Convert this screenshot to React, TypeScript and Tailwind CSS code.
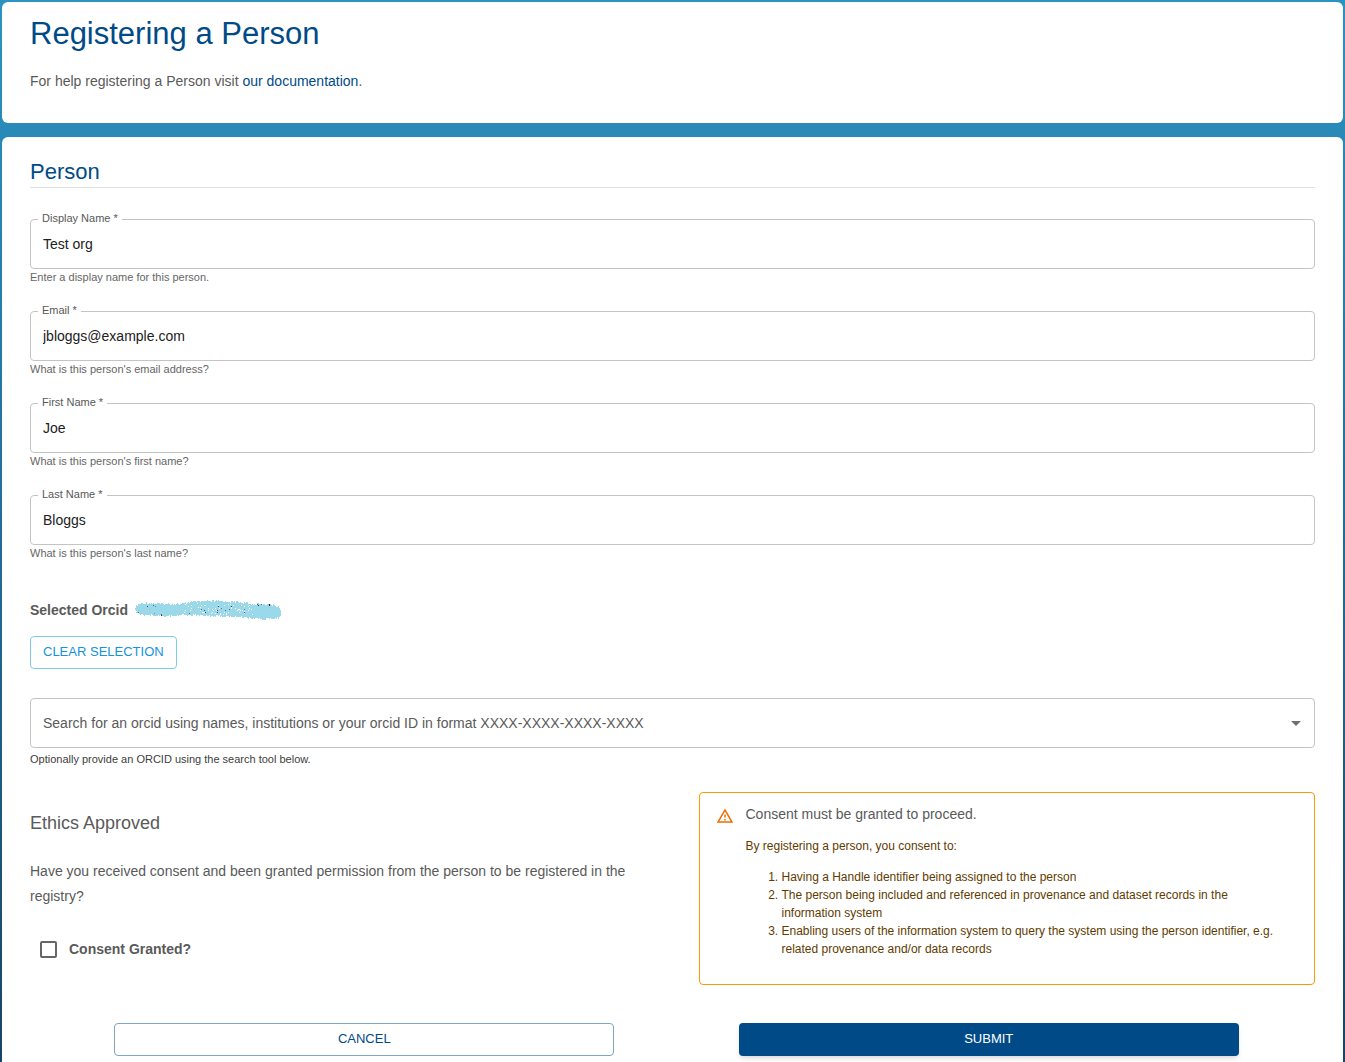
import React from "react";

type FieldProps = {
  id: string;
  label: string;
  value: string;
  helper: string;
  type?: string;
};

const fields: FieldProps[] = [
  { id: "display-name", label: "Display Name", value: "Test org", helper: "Enter a display name for this person." },
  { id: "email", label: "Email", value: "jbloggs@example.com", helper: "What is this person's email address?", type: "email" },
  { id: "first-name", label: "First Name", value: "Joe", helper: "What is this person's first name?" },
  { id: "last-name", label: "Last Name", value: "Bloggs", helper: "What is this person's last name?" },
];

function Field({ id, label, value, helper, type = "text" }: FieldProps) {
  return (
    <div className="relative">
      <input
        id={id}
        type={type}
        defaultValue={value}
        required
        aria-describedby={id + "-help"}
        className="block h-[50px] w-full rounded border border-[#c4c4c4] bg-white px-3 text-sm text-[#212121] outline-none"
      />
      <label htmlFor={id} className="absolute -top-[9px] left-2 bg-white pr-1 pl-1 text-[11px] leading-4 text-[#585858]">
        {label} *
      </label>
      <p id={id + "-help"} className="text-[11px] leading-4 text-[#666666]">
        {helper}
      </p>
    </div>
  );
}

// Brush outline as [x, top, bottom]; the edge between the points is roughened per pixel.
const brush = [
  [0, 8, 12],
  [4, 5, 15],
  [12, 4, 16],
  [28, 5, 17],
  [46, 5, 16],
  [56, 3, 16],
  [80, 2, 17],
  [102, 3, 18],
  [116, 5, 19],
  [124, 5, 20],
  [138, 6, 20],
  [143, 8, 19],
  [146, 11, 15],
];

const specks: [number, number, string][] = [
  [12, 7, "#1f4e79"], [18, 6, "#5b5f97"], [20, 7, "#4a90c2"], [14, 10, "#e7a977"], [1, 13, "#f4b183"],
  [3, 13, "#2f75b5"], [19, 14, "#5b9bd5"], [26, 16, "#3b2a5a"], [26, 15, "#7f3f6f"], [41, 12, "#f4b183"],
  [54, 14, "#7a4b8c"], [58, 10, "#e7a977"], [65, 8, "#fff2cc"], [66, 10, "#b04a5a"], [69, 11, "#2f5597"],
  [70, 13, "#1f3864"], [83, 7, "#3b2a5a"], [82, 11, "#1f4e79"], [82, 13, "#7a3b7c"], [86, 9, "#c0504d"],
  [90, 11, "#2f75b5"], [94, 10, "#7a4b8c"], [96, 7, "#1f3864"], [101, 11, "#ffd966"], [106, 7, "#e7a977"],
  [109, 10, "#8064a2"], [109, 13, "#7a3b7c"], [94, 17, "#e7a977"], [122, 5, "#9c3f2f"], [123, 6, "#1f3864"],
  [126, 5, "#2f75b5"], [133, 5, "#f4b183"], [134, 6, "#1f1f3f"], [134, 5, "#1f1f3f"],
];

function noise(n: number) {
  const s = Math.sin(n * 12.9898) * 43758.5453;
  return s - Math.floor(s);
}

function brushPath() {
  let d = "";
  for (let x = 0; x < 146; x++) {
    const i = brush.findIndex((p) => p[0] > x);
    const [x0, t0, b0] = brush[i - 1];
    const [x1, t1, b1] = brush[i];
    const k = (x - x0) / (x1 - x0);
    const top = Math.round(t0 + (t1 - t0) * k + noise(x + 1) * 2 - 1);
    const bottom = Math.round(b0 + (b1 - b0) * k + noise(x + 300) * 2 - 1);
    d += `M${x} ${top}h1V${bottom}h-1Z`;
  }
  return d;
}

function gapsPath() {
  let d = "";
  for (let n = 0; n < 60; n++) {
    const x = 48 + Math.floor(noise(n + 700) * 72);
    const y = 4 + Math.floor(noise(n + 900) * 12);
    d += `M${x} ${y}h1v1h-1Z`;
  }
  return d;
}

function Redaction() {
  return (
    <svg width="148" height="22" viewBox="0 0 148 22" shapeRendering="crispEdges" className="shrink-0" aria-hidden="true">
      <path d={brushPath()} fill="#99d9ea" />
      <path d={gapsPath()} fill="#ffffff" />
      {specks.map(([x, y, c], i) => (
        <rect key={i} x={x} y={y} width="1" height="1" fill={c} />
      ))}
    </svg>
  );
}

export default function App() {
  return (
    <div className="flex min-h-screen flex-col gap-3.5 bg-linear-to-b from-[#2b93c2] via-[#1f6690] via-60% to-[#174564] px-0.5 pt-0.5 font-['Liberation_Sans',Arial,sans-serif] text-sm text-[#5a5a5a]">
      <header className="rounded-md bg-white px-7 pt-3 pb-[29px]">
        <h1 className="text-[31px] leading-10 text-[#004b87]">Registering a Person</h1>
        <p className="mt-[15px] leading-[25px]">
          For help registering a Person visit{" "}
          <a href="#documentation" className="text-[#004b87]">
            our documentation
          </a>
          .
        </p>
      </header>

      <main className="grow rounded-t-md bg-white px-7 pt-5 pb-1.5">
        <form onSubmit={(e) => e.preventDefault()}>
          <h2 className="border-b border-[#e0e0e0] text-[22px] leading-[30px] text-[#004b87]">Person</h2>

          <div className="mt-[31px] flex flex-col gap-[26px]">
            {fields.map((f) => (
              <Field key={f.id} {...f} />
            ))}
          </div>

          <div className="mt-[37px] flex h-6 items-center gap-[7px]">
            <span className="font-bold">Selected Orcid</span>
            <Redaction />
          </div>

          <button
            type="button"
            className="mt-3.5 block h-[33px] rounded border border-[#7fcbef] px-3 text-[13px] text-[#1593dc]"
          >
            CLEAR SELECTION
          </button>

          <div className="relative mt-[29px]">
            <input
              type="text"
              role="combobox"
              aria-expanded="false"
              aria-label="Orcid search"
              placeholder="Search for an orcid using names, institutions or your orcid ID in format XXXX-XXXX-XXXX-XXXX"
              className="block h-[50px] w-full rounded border border-[#c4c4c4] bg-white pr-10 pl-3 text-sm outline-none placeholder:text-[#5a5a5a]"
            />
            <svg width="10" height="5" viewBox="0 0 10 5" className="absolute top-[23px] right-3.5" aria-hidden="true">
              <path d="M0 0H10L5 5Z" fill="#707070" />
            </svg>
          </div>
          <p className="mt-[3px] text-[11px] leading-4 text-[#404040]">
            Optionally provide an ORCID using the search tool below.
          </p>

          <div className="mt-[25px] grid grid-cols-2 gap-[52px]">
            <section className="pt-4">
              <h3 className="text-lg leading-[30px]">Ethics Approved</h3>
              <p className="mt-[21px] leading-[25px]">
                Have you received consent and been granted permission from the person to be registered in the registry?
              </p>
              <label className="mt-[30px] ml-2.5 flex items-center gap-3 font-bold">
                <input type="checkbox" className="size-[17px] appearance-none rounded-xs border-2 border-[#666666]" />
                Consent Granted?
              </label>
            </section>

            <section className="flex gap-3 rounded border border-[#ff9800] px-4 pt-[9px] pb-[26px]">
              <svg width="18" height="18" viewBox="0 0 24 24" fill="#ed6c02" className="mt-[5px] shrink-0" aria-hidden="true">
                <path d="M12 5.99L19.53 19H4.47L12 5.99M12 2L1 21h22L12 2zm1 14h-2v2h2v-2zm0-6h-2v4h2v-4z" />
              </svg>
              <div className="pr-3 text-xs leading-[18px] text-[#5f3b00]">
                <p className="text-sm leading-[25px] text-[#5a5a5a]">Consent must be granted to proceed.</p>
                <p className="mt-2.5">By registering a person, you consent to:</p>
                <ol className="mt-[13px] list-decimal pl-9">
                  <li>Having a Handle identifier being assigned to the person</li>
                  <li>The person being included and referenced in provenance and dataset records in the information system</li>
                  <li>
                    Enabling users of the information system to query the system using the person identifier, e.g. related
                    provenance and/or data records
                  </li>
                </ol>
              </div>
            </section>
          </div>

          <div className="mt-[38px] grid grid-cols-2 pr-3.5 pl-[22px] text-[13px]">
            <button type="button" className="mx-auto h-[33px] w-4/5 rounded border border-[#7fa5c3] text-[#004b87]">
              CANCEL
            </button>
            <button type="submit" className="mx-auto h-[33px] w-4/5 rounded bg-[#004b87] text-white shadow-md">
              SUBMIT
            </button>
          </div>
        </form>
      </main>
    </div>
  );
}
